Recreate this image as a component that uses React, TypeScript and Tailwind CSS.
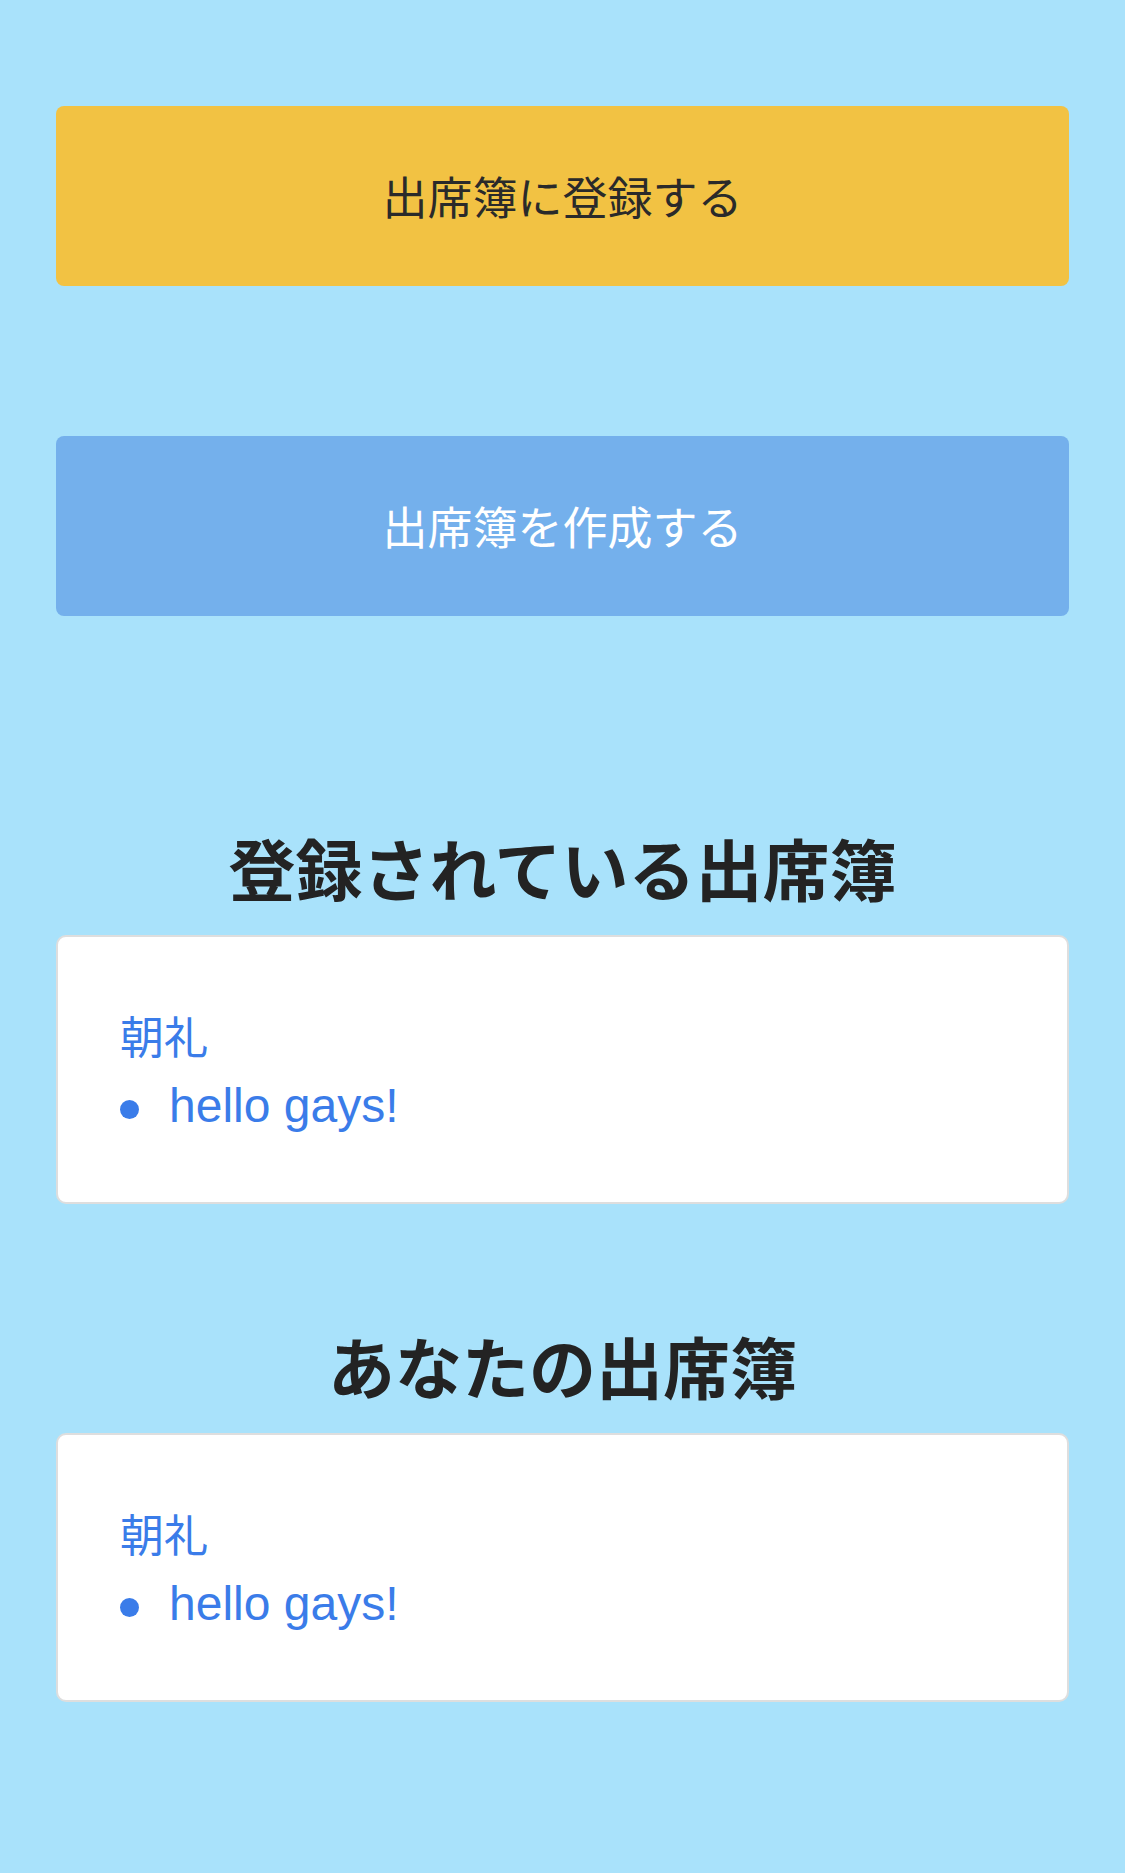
const jp = "font-['Noto_Sans_CJK_JP',sans-serif]";

function AttendanceCard() {
  return (
    <div className="rounded-[10px] border-2 border-[#dedede] bg-white px-[62px] pt-[70px] pb-[64px]">
      <div className={`${jp} h-[56px] flex items-center text-[44px] leading-none text-[#3a7ce9]`}>
        朝礼
      </div>
      <div className="mt-[11px] flex items-center h-[64px]">
        <span className="w-[19px] h-[19px] rounded-full bg-[#3a7ce9] mt-[6px]" />
        <span className="ml-[30px] font-['Liberation_Sans',Arial,sans-serif] text-[48px] leading-[64px] text-[#3a7ce9]">
          hello gays!
        </span>
      </div>
    </div>
  );
}

export default function App() {
  return (
    <div className="min-h-[1873px] bg-[#a9e2fb] px-[56px] pt-[106px]">
      <button
        className={`${jp} w-full h-[180px] rounded-[8px] bg-[#f2c243] text-[45px] text-[#2a2a2a] flex items-center justify-center`}
      >
        出席簿に登録する
      </button>

      <button
        className={`${jp} mt-[150px] w-full h-[180px] rounded-[8px] bg-[#74b0ec] text-[45px] text-white flex items-center justify-center`}
      >
        出席簿を作成する
      </button>

      <h2
        className={`${jp} mt-[203px] h-[96px] flex items-center justify-center text-[67px] font-bold text-[#232323]`}
      >
        登録されている出席簿
      </h2>
      <div className="mt-[20px]">
        <AttendanceCard />
      </div>

      <h2
        className={`${jp} mt-[113px] h-[96px] flex items-center justify-center text-[67px] font-bold text-[#232323]`}
      >
        あなたの出席簿
      </h2>
      <div className="mt-[20px]">
        <AttendanceCard />
      </div>
    </div>
  );
}
